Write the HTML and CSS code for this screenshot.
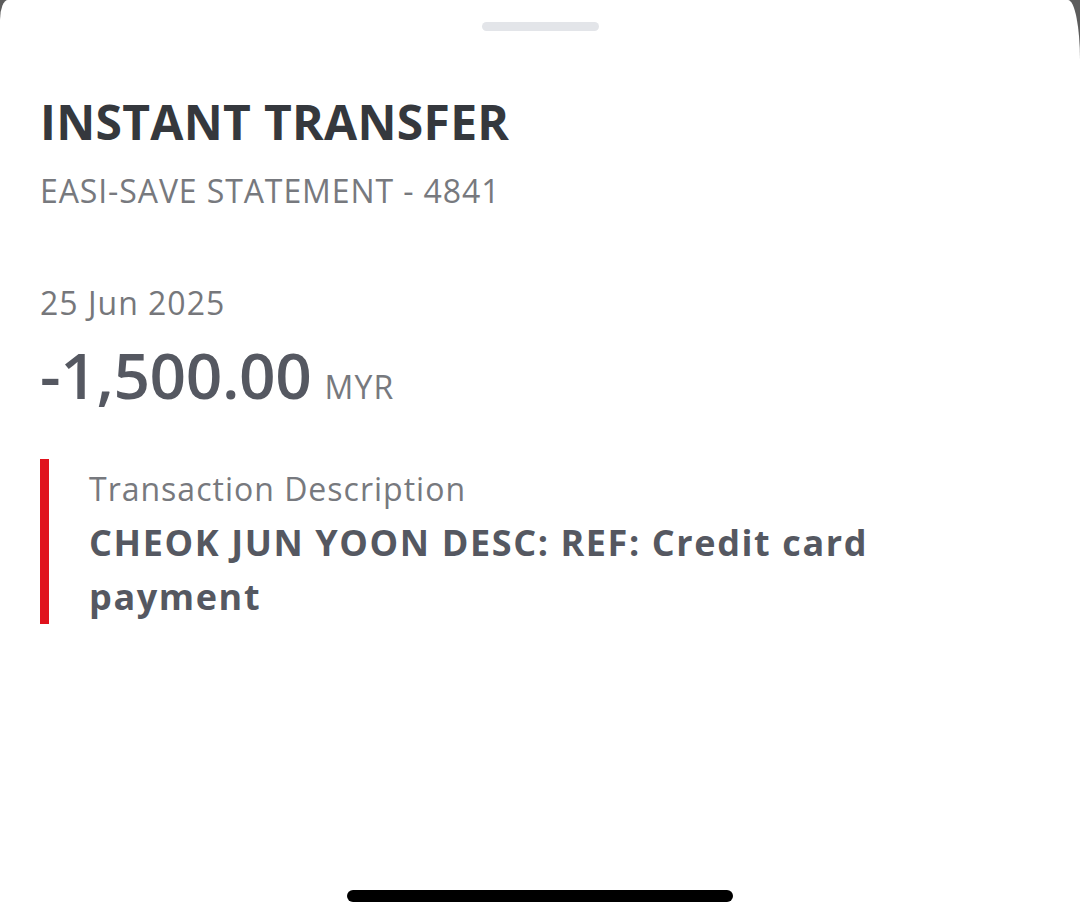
FILE: index.html
```html
<!DOCTYPE html>
<html>
<head>
<meta charset="utf-8">
<link rel="stylesheet" href="styles.css">
</head>
<body>
<div class="sheet">
  <div class="handle"></div>
  <div class="content">
    <h1 class="title">INSTANT TRANSFER</h1>
    <div class="subtitle">EASI-SAVE STATEMENT - 4841</div>
    <div class="date">25 Jun 2025</div>
    <div class="amount"><span class="value">-1,500.00</span><span class="currency">MYR</span></div>
    <div class="desc-block">
      <div class="desc-label">Transaction Description</div>
      <div class="desc-text">CHEOK JUN YOON DESC: REF: Credit card payment</div>
    </div>
  </div>
  <div class="home-indicator"></div>
</div>
</body>
</html>
```

FILE: styles.css
```css
html, body {
  margin: 0;
  padding: 0;
  background: #5c5c5c;
  height: 921px;
  overflow: hidden;
}
.sheet {
  height: 921px;
  background: #ffffff;
  border-top-left-radius: 8px 20px;
  border-top-right-radius: 12px 60px;
  display: flex;
  flex-direction: column;
  font-family: "Open Sans", "Noto Sans", sans-serif;
  box-sizing: border-box;
}
.handle {
  width: 117px;
  height: 9px;
  border-radius: 5px;
  background: #e3e5e9;
  margin: 22px auto 0;
  flex: none;
}
.content {
  flex: 1;
  padding-left: 40px;
}
.title {
  margin: 59px 0 0;
  font-size: 48px;
  font-weight: 700;
  line-height: 64px;
  color: #35383d;
  letter-spacing: 0.3px;
}
.subtitle {
  margin-top: 15px;
  font-size: 32px;
  line-height: 44px;
  color: #77797e;
  letter-spacing: 0.9px;
}
.date {
  margin-top: 68px;
  font-size: 32px;
  line-height: 44px;
  color: #76777b;
  letter-spacing: 1px;
}
.amount {
  margin-top: 10px;
  display: flex;
  align-items: baseline;
  gap: 13px;
  color: #555861;
}
.value {
  font-size: 64px;
  font-weight: 600;
  line-height: 80px;
  letter-spacing: -0.4px;
}
.currency {
  font-size: 32px;
  line-height: 44px;
  color: #77797e;
  letter-spacing: 1.2px;
}
.desc-block {
  margin-top: 44px;
  border-left: 9px solid #e0131d;
  padding: 8px 0 0 40px;
  width: 860px;
}
.desc-label {
  font-size: 32px;
  line-height: 44px;
  color: #77797e;
  letter-spacing: 1px;
}
.desc-text {
  margin-top: 5px;
  font-size: 36px;
  font-weight: 700;
  line-height: 54px;
  color: #555861;
  letter-spacing: 1.6px;
}
.home-indicator {
  width: 386px;
  height: 12px;
  border-radius: 6px;
  background: #000;
  margin: 0 auto 19px;
  flex: none;
}
```
